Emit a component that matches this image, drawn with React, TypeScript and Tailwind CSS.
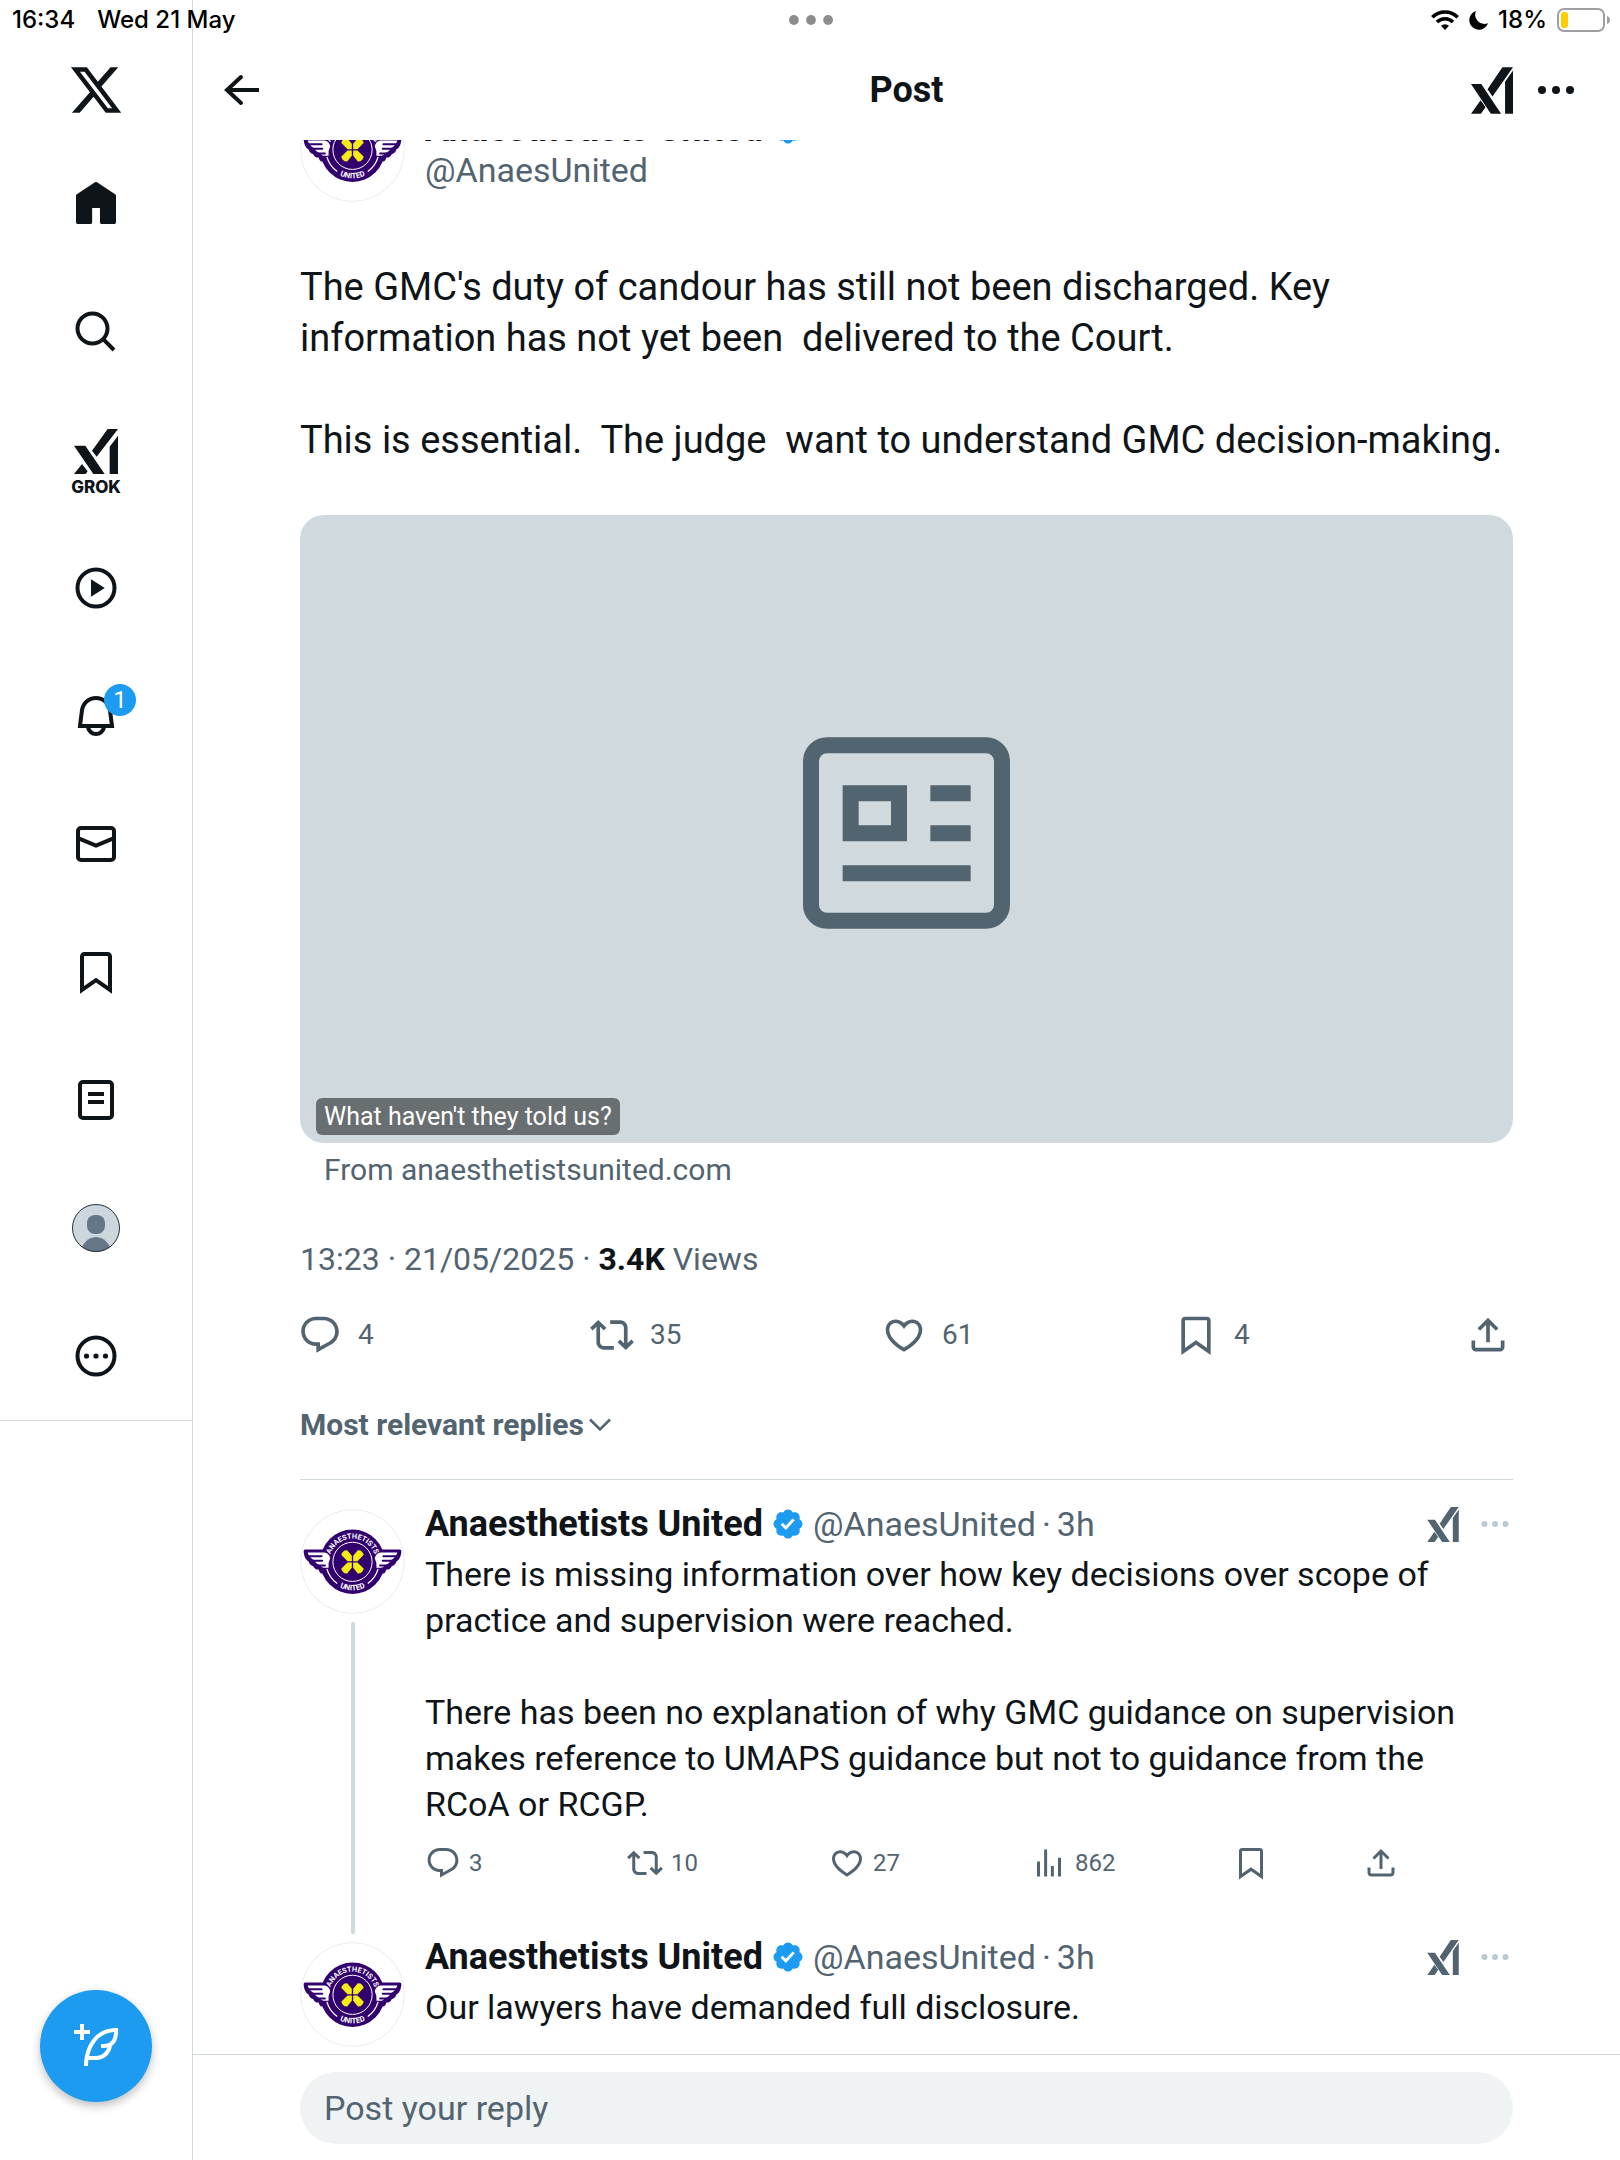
import { useId, useState } from 'react'
import type { ReactNode } from 'react'

const ICONS = {
  x: 'M18.244 2.25h3.308l-7.227 8.26 8.502 11.24H16.17l-5.214-6.817L4.99 21.75H1.68l7.73-8.835L1.254 2.25H8.08l4.713 6.231zm-1.161 17.52h1.833L7.084 4.126H5.117z',
  home: 'M21.591 7.146L12.52 1.157c-.316-.21-.724-.21-1.04 0l-9.071 5.99c-.26.173-.409.456-.409.757v13.183c0 .502.418.913.929.913H9.14c.51 0 .929-.41.929-.913v-7.075h3.909v7.075c0 .502.417.913.928.913h6.165c.511 0 .929-.41.929-.913V7.904c0-.301-.158-.584-.408-.758z',
  search: 'M10.25 3.75c-3.59 0-6.5 2.91-6.5 6.5s2.91 6.5 6.5 6.5c1.795 0 3.419-.726 4.596-1.904 1.178-1.177 1.904-2.801 1.904-4.596 0-3.59-2.91-6.5-6.5-6.5zm-8.5 6.5c0-4.694 3.806-8.5 8.5-8.5s8.5 3.806 8.5 8.5c0 1.986-.682 3.815-1.824 5.262l4.781 4.781-1.414 1.414-4.781-4.781c-1.447 1.142-3.276 1.824-5.262 1.824-4.694 0-8.5-3.806-8.5-8.5z',
  bell: 'M19.993 9.042C19.48 5.017 16.054 2 11.996 2s-7.49 3.021-7.999 7.051L2.866 18H7.1c.463 2.282 2.481 4 4.9 4s4.437-1.718 4.9-4h4.236l-1.143-8.958zM12 20c-1.306 0-2.417-.835-2.829-2h5.658c-.412 1.165-1.523 2-2.829 2zm-6.866-4l.847-6.698C6.364 6.272 8.941 4 11.996 4s5.627 2.268 6.013 5.295L18.864 16H5.134z',
  compose: 'M23 3c-6.62-.1-10.38 2.421-13.05 6.03C7.29 12.61 6 17.331 6 22h2c0-1.007.07-2.012.19-3H12c4.1 0 7.48-3.082 7.94-7.054C22.79 10.147 23.17 6.359 23 3zm-7 8h-1.5v2H16c.63-.016 1.2-.08 1.72-.188C16.95 15.24 14.68 17 12 17H8.55c.57-2.512 1.57-4.851 3-6.78 2.16-2.912 5.29-4.911 9.45-5.187C20.95 8.079 19.9 11 16 11zM4 9V6H1V4h3V1h2v3h3v2H6v3H4z',
  reply: 'M1.751 10c0-4.42 3.584-8 8.005-8h4.366c4.49 0 8.129 3.64 8.129 8.13 0 2.96-1.607 5.68-4.196 7.11l-8.054 4.46v-3.69h-.067c-4.49.1-8.183-3.51-8.183-8.01zm8.005-6c-3.317 0-6.005 2.69-6.005 6 0 3.37 2.77 6.08 6.138 6.01l.351-.01h1.761v2.3l5.087-2.81c1.951-1.08 3.163-3.13 3.163-5.36 0-3.39-2.744-6.13-6.129-6.13H9.756z',
  repost: 'M4.5 3.88l4.432 4.14-1.364 1.46L5.5 7.55V16c0 1.1.896 2 2 2H13v2H7.5c-2.209 0-4-1.79-4-4V7.55L1.432 9.48.068 8.02 4.5 3.88zM16.5 6H11V4h5.5c2.209 0 4 1.79 4 4v8.45l2.068-1.93 1.364 1.46-4.432 4.14-4.432-4.14 1.364-1.46 2.068 1.93V8c0-1.1-.896-2-2-2z',
  like: 'M16.697 5.5c-1.222-.06-2.679.51-3.89 2.16l-.805 1.09-.806-1.09C9.984 6.01 8.526 5.44 7.304 5.5c-1.243.07-2.349.78-2.91 1.91-.552 1.12-.633 2.78.479 4.82 1.074 1.97 3.257 4.27 7.129 6.61 3.87-2.34 6.052-4.64 7.126-6.61 1.111-2.04 1.03-3.7.477-4.82-.561-1.13-1.666-1.84-2.908-1.91zm4.187 7.69c-1.351 2.48-4.001 5.12-8.379 7.67l-.503.3-.504-.3c-4.379-2.55-7.029-5.19-8.382-7.67-1.36-2.5-1.41-4.86-.514-6.67.887-1.79 2.647-2.91 4.601-3.01 1.651-.09 3.368.56 4.798 2.01 1.429-1.45 3.146-2.1 4.796-2.01 1.954.1 3.714 1.22 4.601 3.01.896 1.81.846 4.17-.514 6.67z',
  views: 'M8.75 21V3h2v18h-2zM18 21V8.5h2V21h-2zM4 21l.004-10h2L6 21H4zm9.248 0v-7h2v7h-2z',
  share: 'M12 2.59l5.7 5.7-1.41 1.42L13 6.41V16h-2V6.41l-3.3 3.3-1.41-1.42L12 2.59zM21 15l-.02 3.51c0 1.38-1.12 2.49-2.5 2.49H5.5C4.11 21 3 19.88 3 18.5V15h2v3.5c0 .28.22.5.5.5h12.98c.28 0 .5-.22.5-.5L19 15h2z',
  verified: 'M22.25 12c0-1.43-.88-2.67-2.19-3.34.46-1.39.2-2.9-.81-3.91s-2.52-1.27-3.91-.81c-.66-1.31-1.91-2.19-3.34-2.19s-2.67.88-3.33 2.19c-1.4-.46-2.91-.2-3.92.81s-1.26 2.52-.8 3.91c-1.31.67-2.2 1.91-2.2 3.34s.89 2.67 2.2 3.34c-.46 1.39-.21 2.9.8 3.91s2.52 1.26 3.91.81c.67 1.31 1.91 2.19 3.34 2.19s2.68-.88 3.34-2.19c1.39.45 2.9.2 3.91-.81s1.27-2.52.81-3.91c1.31-.67 2.19-1.91 2.19-3.34zm-11.71 4.2L6.8 12.46l1.41-1.42 2.26 2.26 4.8-5.23 1.47 1.36-6.2 6.77z'
}

function Icon({ name, className }: { name: keyof typeof ICONS; className: string }) {
  return (
    <svg viewBox="0 0 24 24" fill="currentColor" className={className} aria-hidden="true">
      <path d={ICONS[name]} />
    </svg>
  )
}

function Stroke({ className, children }: { className: string; children: ReactNode }) {
  return (
    <svg viewBox="0 0 24 24" fill="none" stroke="currentColor" strokeWidth="2" className={className} aria-hidden="true">
      {children}
    </svg>
  )
}

function BookmarkIcon({ className }: { className: string }) {
  return (
    <Stroke className={className}>
      <path d="M6.2 3h11.6A1.2 1.2 0 0 1 19 4.2V21l-7-4.9L5 21V4.2A1.2 1.2 0 0 1 6.2 3z" />
    </Stroke>
  )
}

// xAI mark
function XaiMark({ className }: { className: string }) {
  return (
    <svg viewBox="273 199 127 141" fill="currentColor" className={className} aria-hidden="true">
      <path d="M273 250h31l60 90h-31zM273 340l29-41 15 21-14 20zM368 199h32l-62 89-15-22zM376 243l24-34v131h-24z" />
    </svg>
  )
}

function Dots({ className }: { className: string }) {
  return (
    <svg viewBox="0 0 36 8" fill="currentColor" className={className} aria-hidden="true">
      <circle cx="4" cy="4" r="4" />
      <circle cx="18" cy="4" r="4" />
      <circle cx="32" cy="4" r="4" />
    </svg>
  )
}

function Wing() {
  return (
    <>
      <path
        fill="#32006e"
        d="M46 179h72l8 70-32 2q-5-4-7-12-11 1-16-10-11-3-14-14-12-6-15-28-1-8 4-8z"
      />
      <path
        fill="#fff"
        d="M54 188h50q15 2 18 17-7 13-5 29h-15q-7-2-10-8-8-1-13-7-3-4-5-8-14-5-20-23z"
      />
      <path d="M50 199h46M64 213h34M78 227h28" fill="none" stroke="#32006e" strokeWidth="6" strokeLinecap="round" />
    </>
  )
}

function Avatar() {
  const id = useId()
  return (
    <svg viewBox="31 57 316 316" className="size-[105px] shrink-0" role="img" aria-label="Anaesthetists United">
      <circle cx="189" cy="215" r="156" fill="#fff" stroke="#ececf0" strokeWidth="3" />
      <circle cx="189" cy="216" r="97" fill="#32006e" />
      <Wing />
      <g transform="translate(378 0) scale(-1 1)">
        <Wing />
      </g>
      <circle cx="189" cy="216" r="66" fill="#32006e" />
      <circle cx="189" cy="216" r="59" fill="none" stroke="#fff" strokeWidth="3" />
      <path d="M112 237A80 80 0 0 0 143 281M266 237A80 80 0 0 1 235 281" fill="none" stroke="#fff" strokeWidth="4" />
      <g fill="#f6eb16">
        <path d="M187 214h-13l-19-19 4-8 6-5 8-1 14 17zM191 214h13l19-19-4-8-6-5-8-1-14 17z" />
        <path d="M187 218h-13l-19 19 4 8 6 5 8 1 14-17zM191 218h13l19 19-4 8-6 5-8 1-14-17z" />
      </g>
      <path id={`${id}top`} d="M119 216A70 70 0 0 1 259 216" fill="none" />
      <path id={`${id}bottom`} d="M103 216A86 86 0 0 0 275 216" fill="none" />
      <g fill="#fff" fontFamily="Roboto, sans-serif" fontWeight="700" textAnchor="middle">
        <text fontSize="22">
          <textPath href={`#${id}top`} startOffset="50%">ANAESTHETISTS</textPath>
        </text>
        <text fontSize="23">
          <textPath href={`#${id}bottom`} startOffset="50%">UNITED</textPath>
        </text>
      </g>
    </svg>
  )
}

function StatusBar() {
  return (
    <div className="absolute inset-x-0 top-0 z-30 grid h-10 grid-cols-3 items-center pr-[10px] pl-3 font-[Inter,sans-serif] text-[24px] font-medium text-black">
      <div className="flex gap-[22px]">
        <span>16:34</span>
        <span>Wed 21 May</span>
      </div>
      <Dots className="h-[10px] w-[44px] justify-self-center text-[#8c8c8c]" />
      <div className="flex items-center justify-end gap-[10px]">
        <svg viewBox="0 0 28 20" className="h-5 w-7" fill="none" stroke="currentColor" strokeWidth="3.6" aria-hidden="true">
          <path d="M1.3 7.2a18 18 0 0 1 25.4 0M6 12a11.4 11.4 0 0 1 16 0" />
          <path d="M14 20l-4-4.2a5.8 5.8 0 0 1 8 0z" fill="currentColor" stroke="none" />
        </svg>
        <svg viewBox="0 0 19 19" className="size-[19px]" fill="currentColor" aria-hidden="true">
          <path d="M7 0a9.6 9.6 0 1 0 12 12.3A9.3 9.3 0 0 1 7 0z" />
        </svg>
        <span>18%</span>
        <svg viewBox="0 0 53 24" className="h-6 w-[53px]" aria-hidden="true">
          <rect x="1" y="1" width="46" height="22" rx="6" fill="none" stroke="#a0a0a0" strokeWidth="2" />
          <path d="M50 8v8q3-1 3-4t-3-4z" fill="#a0a0a0" />
          <rect x="4" y="4" width="7" height="16" rx="3" fill="#ffcc00" />
        </svg>
      </div>
    </div>
  )
}

function NavItem({ label, children }: { label: string; children: ReactNode }) {
  return (
    <li>
      <a href="#" aria-label={label} className="flex h-32 items-center justify-center">
        {children}
      </a>
    </li>
  )
}

function Sidebar() {
  return (
    <aside className="flex w-[193px] shrink-0 flex-col border-r border-[#cfd9de]">
      <a href="#" aria-label="X" className="flex h-[140px] items-center justify-center pt-10">
        <Icon name="x" className="size-14" />
      </a>
      <nav className="border-b border-[#cfd9de]">
        <ul>
          <NavItem label="Home">
            <Icon name="home" className="size-12" />
          </NavItem>
          <NavItem label="Search">
            <Icon name="search" className="size-12" />
          </NavItem>
          <NavItem label="Grok">
            <span className="flex flex-col items-center gap-[5px] pt-1">
              <svg viewBox="222 0 132 135" className="h-[45px] w-11" fill="currentColor" aria-hidden="true">
                <path d="M222 50h34l58 85h-34zM222 135l24-30 17 22-6 8zM323 0h31l-64 83-14-18zM329 53l25-33v115h-25z" />
              </svg>
              <span className="font-[Inter,sans-serif] text-[17px] leading-4 font-extrabold">GROK</span>
            </span>
          </NavItem>
          <NavItem label="Video">
            <Stroke className="size-12">
              <circle cx="12" cy="12" r="9.25" />
              <path d="M9.5 7.6v8.8l6.9-4.4z" fill="currentColor" stroke="none" />
            </Stroke>
          </NavItem>
          <NavItem label="Notifications">
            <span className="relative">
              <Icon name="bell" className="size-12" />
              <span className="absolute -top-2 -right-4 flex size-8 items-center justify-center rounded-full bg-[#1d9bf0] text-[24px] text-white">
                1
              </span>
            </span>
          </NavItem>
          <NavItem label="Messages">
            <Stroke className="size-12">
              <rect x="3" y="4" width="18" height="16" rx="1.5" />
              <path d="M3 9.1l9 3.7 9-3.7" />
            </Stroke>
          </NavItem>
          <NavItem label="Bookmarks">
            <BookmarkIcon className="size-12" />
          </NavItem>
          <NavItem label="Lists">
            <Stroke className="size-12">
              <rect x="4" y="3" width="16" height="18" rx="1.5" />
              <path d="M8 9h8M8 13h8" />
            </Stroke>
          </NavItem>
          <NavItem label="Profile">
            <svg viewBox="0 0 48 48" className="size-12" aria-hidden="true">
              <circle cx="24" cy="24" r="24" fill="#ccd6dd" />
              <rect x="15" y="11" width="18" height="19" rx="8" fill="#657786" />
              <path d="M10 43q5-10 14-10t14 10q-6 5-14 5t-14-5z" fill="#657786" />
              <circle cx="24" cy="24" r="23.5" fill="none" stroke="#30363b" />
            </svg>
          </NavItem>
          <NavItem label="More">
            <Stroke className="size-12">
              <circle cx="12" cy="12" r="9.25" />
              <g fill="currentColor" stroke="none">
                <circle cx="7.25" cy="12" r="1.3" />
                <circle cx="12" cy="12" r="1.3" />
                <circle cx="16.75" cy="12" r="1.3" />
              </g>
            </Stroke>
          </NavItem>
        </ul>
      </nav>
      <button
        aria-label="New post"
        className="mx-auto mt-auto mb-[58px] flex size-28 items-center justify-center rounded-full bg-[#1d9bf0] text-white shadow-[0_4px_10px_rgba(0,0,0,0.25)]"
      >
        <Icon name="compose" className="size-12" />
      </button>
    </aside>
  )
}

function Action({ label, count, small, children }: { label: string; count?: string; small?: boolean; children: ReactNode }) {
  return (
    <button aria-label={label} className={`flex flex-1 items-center text-left ${small ? 'gap-2 text-[24px]' : 'gap-4 text-[28px]'}`}>
      {children}
      {count && <span>{count}</span>}
    </button>
  )
}

interface ReplyProps {
  text: string
  stats?: { replies: string; reposts: string; likes: string; views: string }
}

function Reply({ text, stats }: ReplyProps) {
  return (
    <article className="flex gap-5">
      <div className="flex flex-col items-center gap-2 pt-2">
        <Avatar />
        {stats && <div className="w-1 flex-1 rounded-full bg-[#cfd9de]" />}
      </div>
      <div className="min-w-0 flex-1">
        <div className="flex h-[46px] items-center">
          <span className="text-[36px] font-bold">Anaesthetists United</span>
          <Icon name="verified" className="ml-2 size-[34px] text-[#1d9bf0]" />
          <span className="ml-2 flex gap-[6px] text-[34px] text-[#536471]">
            <span>@AnaesUnited</span>
            <span>·</span>
            <span>3h</span>
          </span>
          <button aria-label="Grok" className="mr-[22px] ml-auto text-[#536471]">
            <XaiMark className="h-[35px] w-8" />
          </button>
          <button aria-label="More" className="mr-1 text-[#b9cad3]">
            <Dots className="h-[6px] w-7" />
          </button>
        </div>
        <p className="mt-1 text-[34px] leading-[46px] whitespace-pre-wrap">{text}</p>
        {stats && (
          <div className="mt-[18px] mr-[114px] mb-[53px] flex text-[#536471]">
            <Action small label="Reply" count={stats.replies}>
              <Icon name="reply" className="size-9" />
            </Action>
            <Action small label="Repost" count={stats.reposts}>
              <Icon name="repost" className="size-9" />
            </Action>
            <Action small label="Like" count={stats.likes}>
              <Icon name="like" className="size-9" />
            </Action>
            <Action small label="Views" count={stats.views}>
              <Icon name="views" className="size-9" />
            </Action>
            <div className="flex w-[166px] justify-between">
              <button aria-label="Bookmark">
                <BookmarkIcon className="size-9" />
              </button>
              <button aria-label="Share">
                <Icon name="share" className="size-9" />
              </button>
            </div>
          </div>
        )}
      </div>
    </article>
  )
}

const POST = `The GMC's duty of candour has still not been discharged. Key information has not yet been  delivered to the Court.

This is essential.  The judge  want to understand GMC decision-making.`

const REPLY = `There is missing information over how key decisions over scope of practice and supervision were reached.

There has been no explanation of why GMC guidance on supervision makes reference to UMAPS guidance but not to guidance from the RCoA or RCGP.`

export default function App() {
  const [draft, setDraft] = useState('')

  return (
    <div className="relative flex h-screen overflow-hidden bg-white font-[Roboto,sans-serif] text-[#0f1419]">
      <StatusBar />
      <Sidebar />

      <main className="flex min-w-0 flex-1 flex-col">
        <header className="relative z-10 grid h-[140px] shrink-0 grid-cols-3 items-center bg-white px-6 pt-10">
          <button aria-label="Back" className="justify-self-start">
            <Stroke className="size-12">
              <path d="M21 12H5" />
              <path d="M12 5.5L5 12l7 6.5" strokeLinecap="round" />
            </Stroke>
          </button>
          <h1 className="text-center text-[36px] font-bold">Post</h1>
          <div className="flex items-center justify-end gap-[25px] pr-[22px]">
            <button aria-label="Grok">
              <XaiMark className="h-[47px] w-[42px]" />
            </button>
            <button aria-label="More">
              <Dots className="h-2 w-9" />
            </button>
          </div>
        </header>

        {/* Feed, scrolled a little under the header */}
        <div className="-mt-[43px] min-h-0 flex-1 overflow-hidden px-[107px]">
          <article>
            <div className="flex gap-5">
              <Avatar />
              <div className="pt-3 leading-10">
                <div className="mb-px flex items-center gap-2 text-[36px] font-bold">
                  Anaesthetists United
                  <Icon name="verified" className="size-[34px] text-[#1d9bf0]" />
                </div>
                <div className="text-[34px] text-[#536471]">@AnaesUnited</div>
              </div>
            </div>

            <p className="mt-[60px] text-[38px] leading-[51px] whitespace-pre-wrap">{POST}</p>

            <a
              href="#"
              className="relative mt-[49px] flex h-[628px] items-center justify-center rounded-3xl bg-[#cfd9de] pt-2"
            >
              <svg viewBox="39 51 621 575" className="h-48 w-[207px]" fill="none" stroke="#536471" strokeWidth="48" aria-hidden="true">
                <rect x="63" y="75" width="573" height="527" rx="48" />
                <path d="M182 219h145v120H182zM421 219h121M421 339h121M158 459h384" />
              </svg>
              <span className="absolute bottom-2 left-4 rounded-md bg-[#696e70] px-2 text-[25px] leading-[37px] text-white">
                What haven't they told us?
              </span>
            </a>
            <div className="mt-[7px] pl-6 text-[30px] leading-10 text-[#536471]">From anaesthetistsunited.com</div>

            <div className="mt-[46px] text-[32px] leading-[46px] text-[#536471]">
              13:23 · 21/05/2025 · <span className="font-bold text-[#0f1419]">3.4K</span> Views
            </div>

            <div className="mt-[31px] mr-[3px] -ml-0.5 flex text-[#536471]">
              <Action label="Reply" count="4">
                <Icon name="reply" className="size-11" />
              </Action>
              <Action label="Repost" count="35">
                <Icon name="repost" className="size-11" />
              </Action>
              <Action label="Like" count="61">
                <Icon name="like" className="size-11" />
              </Action>
              <Action label="Bookmark" count="4">
                <BookmarkIcon className="size-11" />
              </Action>
              <button aria-label="Share">
                <Icon name="share" className="size-11" />
              </button>
            </div>
          </article>

          <button className="mt-12 flex items-center gap-[5px] text-[30px] leading-10 font-bold text-[#536471]">
            Most relevant replies
            <svg viewBox="0 0 22 14" className="h-[14px] w-[22px]" fill="none" stroke="currentColor" strokeWidth="2.5" aria-hidden="true">
              <path d="M1 1.5l10 10 10-10" />
            </svg>
          </button>

          <section className="mt-[34px] border-t border-[#cfd9de] pt-[21px]">
            <Reply text={REPLY} stats={{ replies: '3', reposts: '10', likes: '27', views: '862' }} />
            <Reply text="Our lawyers have demanded full disclosure." />
          </section>
        </div>

        <footer className="shrink-0 border-t border-[#cfd9de] px-[107px] pt-[17px] pb-4">
          <input
            aria-label="Post your reply"
            placeholder="Post your reply"
            value={draft}
            onChange={(e) => setDraft(e.target.value)}
            className="block h-[72px] w-full rounded-full bg-[#eff3f4] px-6 text-[34px] outline-none placeholder:text-[#536471]"
          />
        </footer>
      </main>
    </div>
  )
}
